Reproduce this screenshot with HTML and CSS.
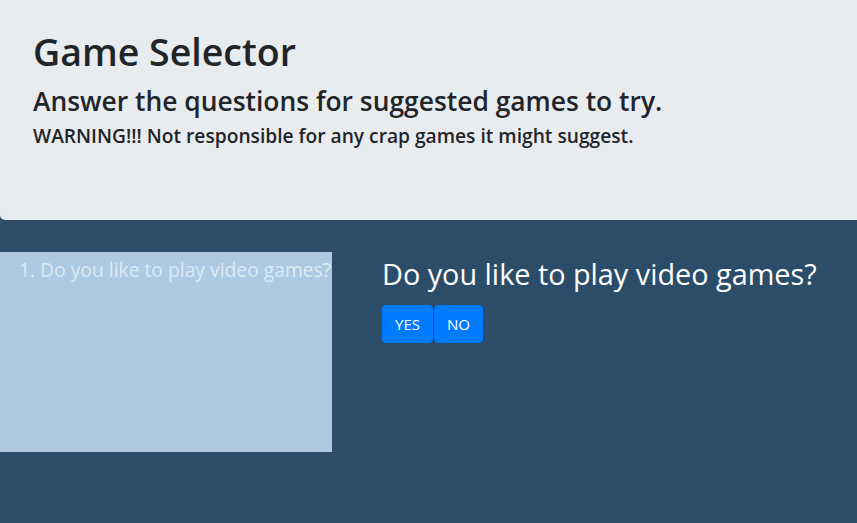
FILE: index.html
```html
<!DOCTYPE html>
<html>
<head>
<meta charset="utf-8">
<link rel="stylesheet" href="styles.css">
</head>
<body>
<header class="jumbotron">
  <h1 class="title">Game Selector</h1>
  <h3 class="subtitle">Answer the questions for suggested games to try.</h3>
  <h5 class="warning">WARNING!!! Not responsible for any crap games it might suggest.</h5>
</header>
<main class="main">
  <section class="history">
    <p class="history-item">1. Do you like to play video games?</p>
  </section>
  <section class="question">
    <h2 class="question-text">Do you like to play video games?</h2>
    <div class="buttons">
      <button class="btn">YES</button>
      <button class="btn">NO</button>
    </div>
  </section>
</main>
</body>
</html>
```
FILE: styles.css
```css
html, body {
  margin: 0;
  padding: 0;
  height: 100%;
}
body {
  font-family: "Open Sans", "Noto Sans", sans-serif;
  background: #2b4d69;
  color: #212529;
}
.jumbotron {
  background: #e9ecef;
  padding: 28px 33px 0;
  height: 220px;
  box-sizing: border-box;
  border-radius: 0 0 0 5px;
}
.title {
  margin: 0;
  font-size: 37.5px;
  font-weight: 600;
  line-height: 48px;
}
.subtitle {
  margin: 7px 0 0;
  font-size: 26.4px;
  font-weight: 600;
  line-height: 36px;
}
.warning {
  margin: 4px 0 0;
  font-size: 19.2px;
  font-weight: 600;
  line-height: 26px;
}
.main {
  display: flex;
  padding-top: 32px;
  gap: 50px;
}
.history {
  width: 332px;
  height: 200px;
  background: #adcae2;
  box-sizing: border-box;
  padding: 5px 0 0 19px;
}
.history-item {
  margin: 0;
  color: #dde9f3;
  font-size: 19.3px;
  line-height: 26px;
  white-space: nowrap;
}
.question {
  padding-top: 4px;
}
.question-text {
  margin: 0 0 13px;
  color: #fff;
  font-size: 28.8px;
  font-weight: 400;
  line-height: 36px;
}
.buttons {
  display: flex;
  gap: 1px;
}
.btn {
  font-family: inherit;
  background: #007bff;
  color: #fff;
  border: 1px solid #007bff;
  border-radius: 4px;
  font-size: 15px;
  height: 38px;
  padding: 0 12px;
  cursor: pointer;
}
```
